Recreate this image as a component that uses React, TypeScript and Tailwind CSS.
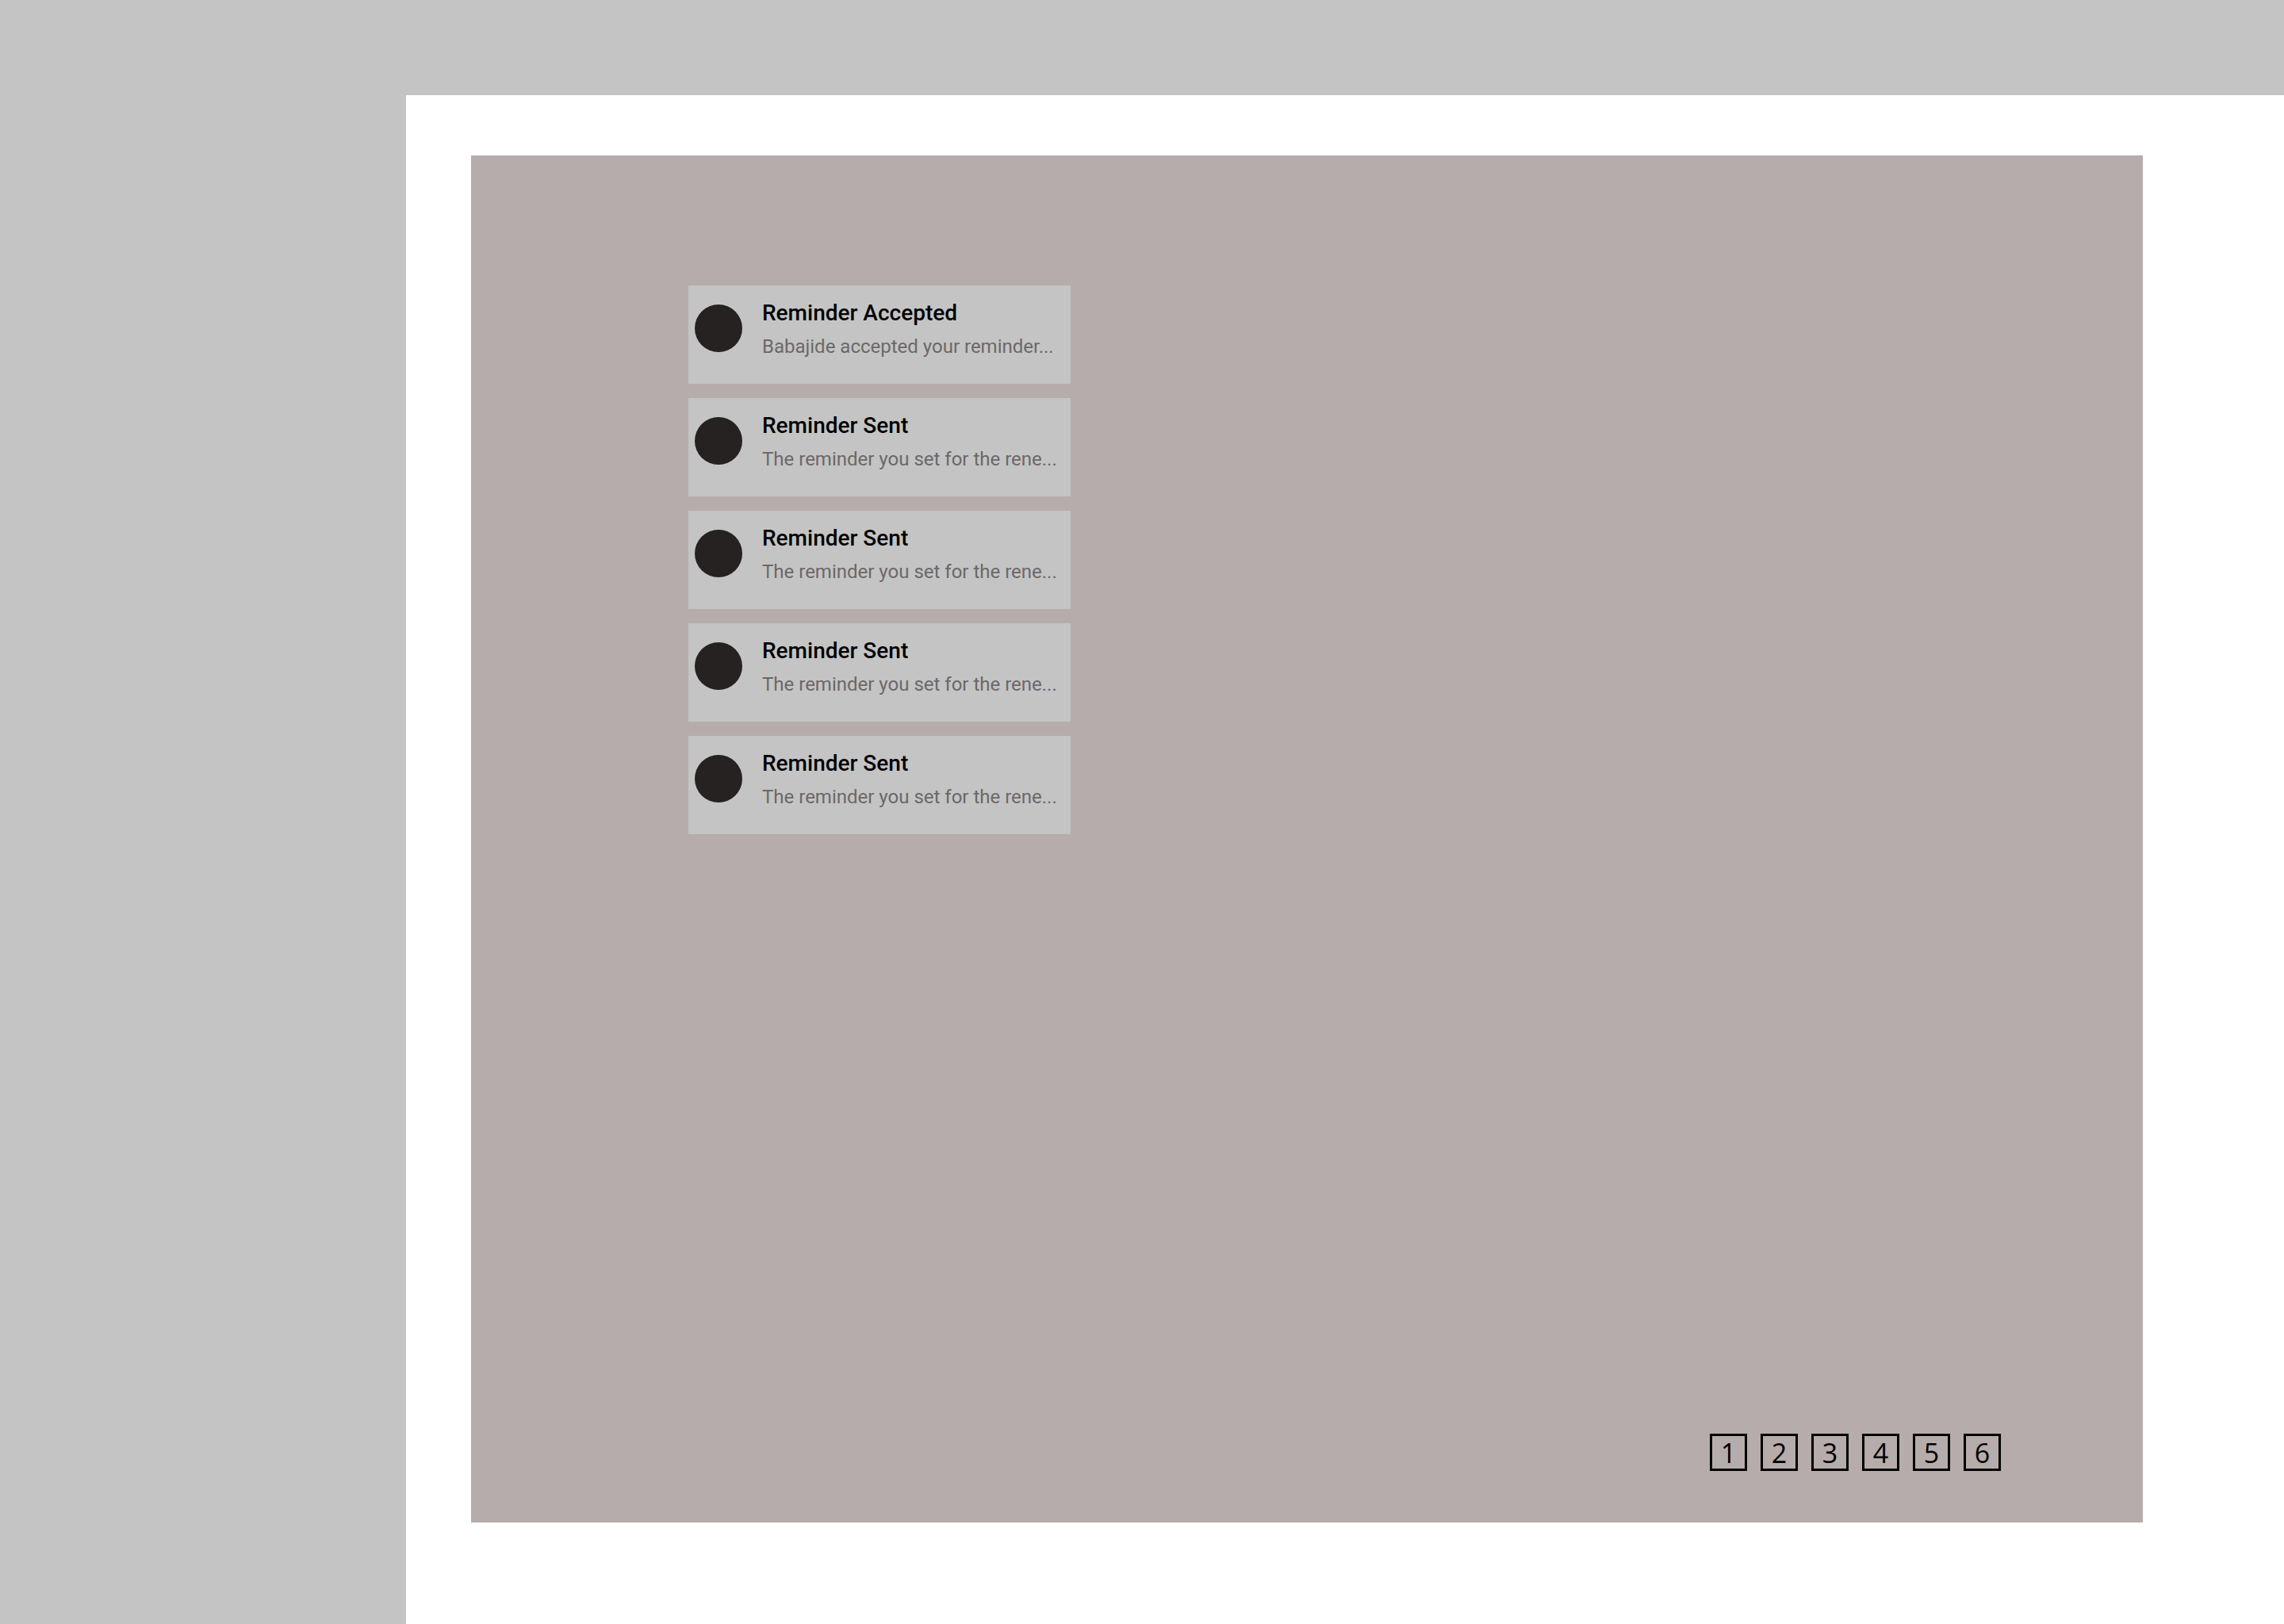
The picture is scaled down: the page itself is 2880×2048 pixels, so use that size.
import React from "react";

const items = [
  { title: "Reminder Accepted", body: "Babajide accepted your reminder..." },
  { title: "Reminder Sent", body: "The reminder you set for the rene..." },
  { title: "Reminder Sent", body: "The reminder you set for the rene..." },
  { title: "Reminder Sent", body: "The reminder you set for the rene..." },
  { title: "Reminder Sent", body: "The reminder you set for the rene..." },
];

export default function App() {
  return (
    <div className="w-[2880px] h-[2048px] bg-[#c4c4c4] flex flex-col overflow-hidden">
      <div className="h-[120px] shrink-0" />
      <div className="flex flex-1">
        <div className="w-[512px] shrink-0" />
        <div className="flex-1 bg-white pl-[82px] pt-[76px] pr-[178px]">
          <div className="h-[1724px] bg-[#b5acab] flex flex-col pl-[274px] pt-[164px] pr-[179px] pb-[65px]">
            <div className="flex flex-col gap-[18px]">
              {items.map((it, i) => (
                <div
                  key={i}
                  className="w-[482px] h-[124px] bg-[#c4c4c4] flex items-start"
                  style={{ fontFamily: "Roboto, 'Liberation Sans', sans-serif" }}
                >
                  <div className="ml-[8px] mt-[24px] w-[60px] h-[60px] rounded-full bg-[#252221] shrink-0" />
                  <div className="ml-[25px] pt-[19px] flex flex-col">
                    <div className="text-[28px] leading-[32px] font-medium text-black">{it.title}</div>
                    <div className="mt-[11px] text-[24px] leading-[30px] text-[#6b6869]">{it.body}</div>
                  </div>
                </div>
              ))}
            </div>
            <div className="mt-auto flex justify-end gap-[17px]">
              {[1, 2, 3, 4, 5, 6].map((n) => (
                <div
                  key={n}
                  className="w-[47px] h-[47px] border-[3px] border-black flex items-center justify-center text-[34px] leading-none text-black"
                  style={{ fontFamily: "'Open Sans', sans-serif" }}
                >
                  {n}
                </div>
              ))}
            </div>
          </div>
        </div>
      </div>
    </div>
  );
}
